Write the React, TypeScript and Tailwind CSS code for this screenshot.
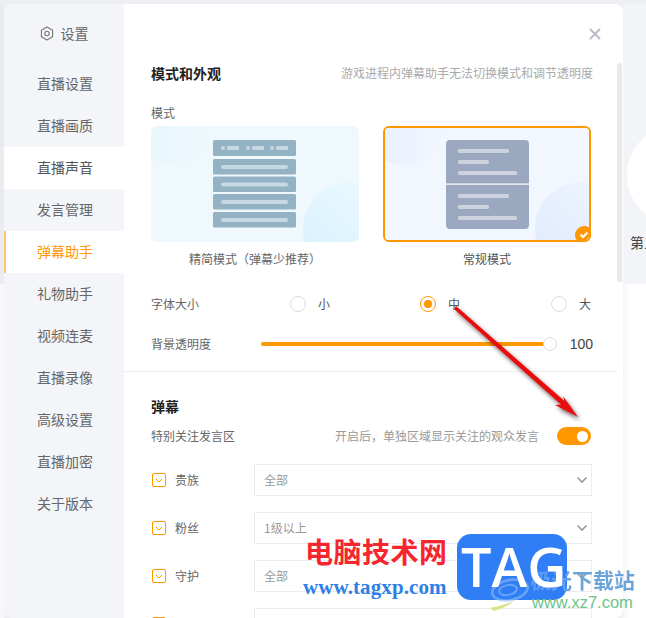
import React from "react";

const font = { fontFamily: '"Noto Sans CJK SC", "Noto Sans", sans-serif' };

const navItems = ["直播设置", "直播画质", "直播声音", "发言管理", "弹幕助手", "礼物助手", "视频连麦", "直播录像", "高级设置", "直播加密", "关于版本"];

function Nav() {
  return (
    <div className="w-[120px] shrink-0 bg-[#f4f5f9]">
      <div className="h-[59px] flex items-center justify-center gap-[7px] pb-[1px] text-[14px] text-[#666]">
        <svg width="14" height="15" viewBox="0 0 14 15" fill="none" stroke="#777" strokeWidth="1.1">
          <path d="M7 1 L12.6 4.2 V10.8 L7 14 L1.4 10.8 V4.2 Z" strokeLinejoin="round" />
          <circle cx="7" cy="7.5" r="2.2" />
        </svg>
        <span>设置</span>
      </div>
      {navItems.map((n) => {
        const active = n === "弹幕助手";
        const white = n === "直播声音";
        return (
          <div
            key={n}
            className={`h-[42px] flex items-center pb-[1px] text-[14px] ${
              active
                ? "bg-white text-[#ff9800] border-l-2 border-[#ffc57a] pl-[31px]"
                : white
                ? "bg-white text-[#555] pl-[33px]"
                : "text-[#666] pl-[33px]"
            }`}
          >
            {n}
          </div>
        );
      })}
    </div>
  );
}

function CardOne() {
  const rows = [159, 176.5, 194, 212];
  return (
    <svg width="208" height="116" viewBox="151 126 208 116" className="block rounded-md">
      <defs>
        <linearGradient id="c1t" x1="0" y1="0" x2="1" y2="0">
          <stop offset="0" stopColor="#e6f6fc" />
          <stop offset="1" stopColor="#eff9fd" />
        </linearGradient>
        <linearGradient id="c1b" x1="0" y1="1" x2="1" y2="0">
          <stop offset="0" stopColor="#d6f0fe" />
          <stop offset="1" stopColor="#eefaff" />
        </linearGradient>
      </defs>
      <rect x="151" y="126" width="208" height="116" fill="#eff9fd" />
      <circle cx="173" cy="126" r="39" fill="url(#c1t)" />
      <circle cx="350" cy="229" r="47" fill="url(#c1b)" />
      <rect x="213" y="140" width="83" height="16" rx="1.5" fill="#93b3c4" />
      {[221, 246, 270].map((x) => (
        <g key={x} fill="#c6d8e1">
          <circle cx={x + 2} cy="148" r="2" />
          <rect x={x + 6} y="146" width="12" height="4" rx="1" />
        </g>
      ))}
      {rows.map((y) => (
        <g key={y}>
          <rect x="213" y={y} width="83" height="15.5" rx="1.5" fill="#93b3c4" />
          <rect x="221" y={y + 6} width="67" height="4" rx="2" fill="#c6d8e1" />
        </g>
      ))}
    </svg>
  );
}

function CardTwo() {
  const lines: [number, number][] = [
    [149, 51], [160, 31], [171, 59], [194, 51], [205, 31], [216, 59],
  ];
  return (
    <div className="w-[208px] h-[116px] rounded-[6px] border-2 border-[#ff9800] overflow-hidden">
      <svg width="204" height="112" viewBox="385 128 204 112" className="block">
        <defs>
          <linearGradient id="c2t" x1="0" y1="0" x2="1" y2="0">
            <stop offset="0" stopColor="#e6effd" />
            <stop offset="1" stopColor="#f2f6fe" />
          </linearGradient>
          <linearGradient id="c2b" x1="0" y1="1" x2="1" y2="0">
            <stop offset="0" stopColor="#dde9fd" />
            <stop offset="1" stopColor="#f2f6fe" />
          </linearGradient>
        </defs>
        <rect x="385" y="128" width="204" height="112" fill="#f2f6fe" />
        <circle cx="404" cy="126" r="39" fill="url(#c2t)" />
        <circle cx="582" cy="229" r="47" fill="url(#c2b)" />
        <rect x="446" y="140" width="83" height="89" rx="4" fill="#9ba9c0" />
        <rect x="446" y="183.5" width="83" height="1.2" fill="#fff" />
        {lines.map(([y, w]) => (
          <rect key={y} x="458" y={y} width={w} height="4" rx="1.5" fill="#cdd3de" />
        ))}
        <circle cx="584" cy="235" r="9" fill="#ff9800" />
        <path d="M580.5 234.5 L583 237 L587.5 232.5" fill="none" stroke="#fff" strokeWidth="2" />
      </svg>
    </div>
  );
}

function Radio({ on, label, className }: { on?: boolean; label: string; className?: string }) {
  return (
    <div className={`flex items-center gap-[12px] ${className ?? ""}`}>
      {on ? (
        <span className="w-4 h-4 rounded-full border border-[#ff9800] flex items-center justify-center">
          <span className="w-2 h-2 rounded-full bg-[#ff9800]" />
        </span>
      ) : (
        <span className="w-4 h-4 rounded-full border border-[#dcdcdc] bg-white" />
      )}
      <span className="text-[12px] text-[#555]">{label}</span>
    </div>
  );
}

function FilterRow({ label, value }: { label: string; value?: string }) {
  return (
    <div className="flex items-center h-[32px] mb-[16px]">
      <span className="w-[14px] h-[14px] ml-[1px] rounded-[2px] border border-[#ff9800] flex items-center justify-center shrink-0">
        <svg width="8" height="6" viewBox="0 0 8 6" fill="none" stroke="#ff9800" strokeWidth="1">
          <path d="M1 2 L4 5 L7 2" />
        </svg>
      </span>
      <span className="w-[88px] pl-[9px] text-[12px] text-[#666] shrink-0">{label}</span>
      <div className="w-[338px] h-[32px] border border-[#ececec] flex items-center justify-between pl-[9px] pr-[3px] text-[12px] text-[#999] shrink-0">
        <span>{value}</span>
        <svg width="12" height="8" viewBox="0 0 12 8" fill="none" stroke="#9a9a9a" strokeWidth="1.6">
          <path d="M1.5 1.5 L6 6 L10.5 1.5" />
        </svg>
      </div>
    </div>
  );
}

export default function App() {
  return (
    <div style={font} className="relative w-[646px] h-[618px] overflow-hidden bg-[#eeeff3] pt-[4px] flex">
      <div className="w-[4px] shrink-0 flex flex-col">
        <div className="h-[280px] bg-[#eaebef]" />
        <div className="flex-1 bg-[#f7f7f7]" />
      </div>
      <div className="relative z-10 flex w-[619px] h-[614px] rounded-lg overflow-hidden shrink-0">
        <Nav />
        <div className="w-[499px] shrink-0 bg-white relative overflow-hidden">
          <svg width="12" height="12" viewBox="0 0 12 12" stroke="#b9bcc4" strokeWidth="2" className="absolute left-[465px] top-[24px]">
            <path d="M1 1 L11 11 M11 1 L1 11" />
          </svg>
          <div className="absolute left-[493px] top-[59px] w-[5px] h-[219px] rounded-[3px] bg-[#e8e9ec]" />

          <div className="pl-[27px] pr-[30px]">
            <div className="pt-[58px] flex justify-between items-center h-[80px]">
              <span className="text-[14px] font-bold text-[#222]">模式和外观</span>
              <span className="text-[12px] text-[#aaa]">游戏进程内弹幕助手无法切换模式和调节透明度</span>
            </div>
            <div className="text-[12px] text-[#666] h-[20px] mt-[19px] leading-[20px]">模式</div>
            <div className="flex gap-[24px] mt-[3px]">
              <div className="w-[208px] text-center">
                <CardOne />
                <div className="text-[12px] text-[#666] mt-[9px] leading-[16px]">精简模式（弹幕少推荐）</div>
              </div>
              <div className="w-[208px] text-center">
                <CardTwo />
                <div className="text-[12px] text-[#555] mt-[9px] leading-[16px]">常规模式</div>
              </div>
            </div>
            <div className="flex items-center h-[20px] mt-[27px]">
              <span className="w-[139px] text-[12px] text-[#666]">字体大小</span>
              <Radio label="小" className="w-[130px]" />
              <Radio on label="中" className="w-[131px]" />
              <Radio label="大" />
            </div>
            <div className="flex items-center h-[20px] mt-[20px]">
              <span className="w-[110px] text-[12px] text-[#666]">背景透明度</span>
              <div className="relative w-[290px] h-[4px] rounded-full bg-[#ff9800]">
                <span className="absolute -right-[7px] -top-[5.5px] w-[14px] h-[14px] rounded-full bg-white border border-[#dcdcdc]" />
              </div>
              <span style={{ fontFamily: '"Liberation Sans", sans-serif' }} className="ml-[20px] text-[14px] text-[#444]">100</span>
            </div>
          </div>
          <div className="h-[1px] w-[493px] bg-[#eeeeee] mt-[17px]" />
          <div className="pl-[27px] pr-[32px]">
            <div className="text-[14px] font-bold text-[#222] mt-[24px] h-[20px] leading-[20px]">弹幕</div>
            <div className="flex items-center justify-between h-[20px] mt-[10px]">
              <span className="text-[12px] text-[#666]">特别关注发言区</span>
              <div className="flex items-center gap-[18px]">
                <span className="text-[12px] text-[#999]">开启后，单独区域显示关注的观众发言</span>
                <span className="w-[34px] h-[18px] rounded-full bg-[#ff9800] flex items-center justify-end pr-[3px]">
                  <span className="w-[11px] h-[11px] rounded-full bg-white" />
                </span>
              </div>
            </div>
            <div className="mt-[18px]">
              <FilterRow label="贵族" value="全部" />
              <FilterRow label="粉丝" value="1级以上" />
              <FilterRow label="守护" value="全部" />
              <FilterRow label="" value="" />
            </div>
          </div>
        </div>
      </div>

      <div className="flex-1 min-w-0 h-[614px] flex flex-col">
        <div className="h-[280px] bg-[#f3f4f8] relative overflow-hidden">
          <div className="absolute left-[7px] top-[229px] text-[14px] text-[#444] whitespace-nowrap leading-[18px]">第三</div>
          <div className="absolute left-[4px] top-[121px] w-[100px] h-[100px] rounded-full bg-white" />
        </div>
        <div className="flex-1 bg-gradient-to-r from-[#f5f5f5] to-white to-[30%]" />
      </div>

      {/* red annotation arrow */}
      <svg width="646" height="618" viewBox="0 0 646 618" className="absolute left-0 top-0 z-20 pointer-events-none">
        <defs>
          <filter id="arrowShadow" x="-20%" y="-20%" width="140%" height="140%">
            <feDropShadow dx="2" dy="3" stdDeviation="2" floodColor="#000" floodOpacity="0.6" />
          </filter>
        </defs>
        <path
          d="M454 309 L456 306 L564.5 401 L563 396 L578 417 L555 405 L561 404.5 Z"
          fill="#e60c0c"
          filter="url(#arrowShadow)"
        />
      </svg>

      {/* watermarks */}
      <div className="absolute z-20 left-[305px] top-[533px] text-[28px] leading-[36px] font-bold text-[#f5262e] tracking-[0.5px] whitespace-nowrap">电脑技术网</div>
      <div style={{ fontFamily: '"Liberation Serif", serif' }} className="absolute z-20 left-[303px] top-[575px] text-[21px] leading-[24px] text-[#2f7fe8] font-bold tracking-[0.1px] whitespace-nowrap">www.tagxp.com</div>
      <div className="absolute z-20 left-[457px] top-[534px] w-[110px] h-[66px] rounded-[14px] bg-[#2f7ef6]" />
      <svg width="60" height="40" viewBox="0 0 60 40" fill="none" className="absolute z-20 left-[484px] top-[576px]">
        <ellipse cx="26" cy="14" rx="18" ry="10" stroke="#8fbdf5" strokeWidth="2.5" opacity="0.6" transform="rotate(-12 26 14)" />
        <ellipse cx="24" cy="14" rx="9" ry="5" stroke="#8fbdf5" strokeWidth="2" opacity="0.6" transform="rotate(-12 24 14)" />
        <path d="M6 32 Q18 30 30 25 Q22 32 10 35 Z" fill="#d8e48a" />
      </svg>
      <div className="absolute z-20 left-[530px] top-[565px] text-[21px] leading-[28px] font-bold text-transparent bg-clip-text bg-[linear-gradient(90deg,#5d9df6_37px,#6aa4d8_37px)] whitespace-nowrap">极光下载站</div>
      <div style={{ fontFamily: '"Open Sans", sans-serif' }} className="absolute z-20 left-[461px] top-[531px] text-[54px] leading-[70px] font-semibold text-white whitespace-nowrap">TAG</div>
      <div style={{ fontFamily: '"Liberation Sans", sans-serif' }} className="absolute z-20 left-[532px] top-[592px] text-[16.5px] leading-[20px] text-[#6cc48a] whitespace-nowrap">www.xz7.com</div>
    </div>
  );
}
